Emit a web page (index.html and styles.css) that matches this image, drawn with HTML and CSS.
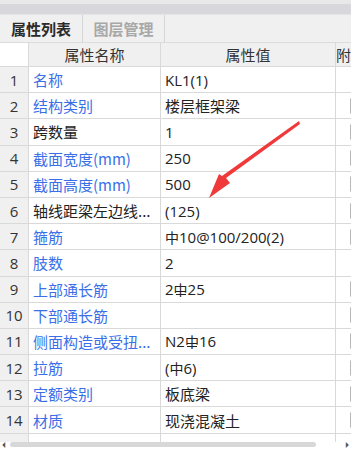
FILE: index.html
```html
<!DOCTYPE html>
<html>
<head>
<meta charset="utf-8">
<link rel="stylesheet" href="styles.css">
</head>
<body>
<div class="panel">
  <div class="topband"></div>
  <div class="tabs">
    <div class="tab active">属性列表</div>
    <div class="tab">图层管理</div>
    <div class="tabfill"></div>
  </div>
  <div class="grid">
    <div class="row head">
      <div class="c num corner"></div>
      <div class="c name">属性名称</div>
      <div class="c val">属性值</div>
      <div class="c extra">附</div>
    </div>
    <div class="row"><div class="c num">1</div><div class="c name blue">名称</div><div class="c val">KL1(1)</div><div class="c extra"></div></div>
    <div class="row"><div class="c num">2</div><div class="c name blue">结构类别</div><div class="c val">楼层框架梁</div><div class="c extra"><span class="box"></span></div></div>
    <div class="row"><div class="c num">3</div><div class="c name">跨数量</div><div class="c val">1</div><div class="c extra"><span class="box"></span></div></div>
    <div class="row"><div class="c num">4</div><div class="c name blue">截面宽度(mm)</div><div class="c val">250</div><div class="c extra"><span class="box"></span></div></div>
    <div class="row"><div class="c num">5</div><div class="c name blue">截面高度(mm)</div><div class="c val">500</div><div class="c extra"><span class="box"></span></div></div>
    <div class="row"><div class="c num">6</div><div class="c name">轴线距梁左边线...</div><div class="c val">(125)</div><div class="c extra"><span class="box"></span></div></div>
    <div class="row"><div class="c num">7</div><div class="c name blue">箍筋</div><div class="c val"><span class="hpb">中</span>10@100/200(2)</div><div class="c extra"><span class="box"></span></div></div>
    <div class="row"><div class="c num">8</div><div class="c name blue">肢数</div><div class="c val">2</div><div class="c extra"></div></div>
    <div class="row"><div class="c num">9</div><div class="c name blue">上部通长筋</div><div class="c val">2<span class="hrb">中</span>25</div><div class="c extra"><span class="box"></span></div></div>
    <div class="row"><div class="c num">10</div><div class="c name blue">下部通长筋</div><div class="c val"></div><div class="c extra"><span class="box"></span></div></div>
    <div class="row"><div class="c num">11</div><div class="c name blue">侧面构造或受扭...</div><div class="c val">N2<span class="hrb">中</span>16</div><div class="c extra"><span class="box"></span></div></div>
    <div class="row"><div class="c num">12</div><div class="c name blue">拉筋</div><div class="c val">(<span class="hpb">中</span>6)</div><div class="c extra"><span class="box"></span></div></div>
    <div class="row"><div class="c num">13</div><div class="c name blue">定额类别</div><div class="c val">板底梁</div><div class="c extra"><span class="box"></span></div></div>
    <div class="row"><div class="c num">14</div><div class="c name blue">材质</div><div class="c val">现浇混凝土</div><div class="c extra"><span class="box"></span></div></div>
    <div class="row partial"><div class="c num"></div><div class="c name"></div><div class="c val"></div><div class="c extra"></div></div>
  </div>
  <div class="hscroll">
    <span class="arr">&#x23F4;</span>
    <div class="thumb"></div>
    <span class="arr right">&#x23F5;</span>
  </div>
  <svg class="arrow" width="351" height="449" viewBox="0 0 351 449">
    <polygon points="299,121 300,124 226,178 230,183 209,198 219,174 222,176" fill="#f0393a"/>
  </svg>
</div>
</body>
</html>
```

FILE: styles.css
```css
html, body {
  margin: 0;
  padding: 0;
  background: #ffffff;
}
body {
  font-family: "Noto Sans CJK SC", "Open Sans", sans-serif;
  font-size: 15px;
  color: #222;
  width: 351px;
  height: 449px;
  overflow: hidden;
}
.panel {
  position: relative;
  width: 351px;
  height: 449px;
  overflow: hidden;
  display: flex;
  flex-direction: column;
}
.topband {
  height: 15px;
  background: #d8d8dc;
  border-top: 4px solid #e8e8ea;
  box-sizing: border-box;
  border-bottom: 1px solid #e4e4e6;
}
.tabs {
  display: flex;
  height: 28px;
  background: #f0f0f0;
  border-bottom: 1px solid #dcdcdc;
  box-sizing: border-box;
}
.tab {
  width: 83px;
  box-sizing: border-box;
  border-right: 1px solid #d6d6d6;
  display: flex;
  align-items: center;
  justify-content: center;
  font-weight: bold;
  font-size: 15px;
  color: #a8a8a8;
}
.tab.active {
  color: #2b2b2b;
}
.tab + .tab {
  width: 82px;
}
.tabfill {
  flex: 1;
}
.grid {
  display: flex;
  flex-direction: column;
}
.row {
  display: flex;
  height: 26.2px;
  border-bottom: 1px solid #d9d9d9;
  box-sizing: border-box;
}
.row.head {
  height: 24px;
}
.row.partial {
  border-bottom: none;
  height: 8px;
}
.c {
  box-sizing: border-box;
  border-right: 1px solid #d9d9d9;
  display: flex;
  align-items: center;
  white-space: nowrap;
  overflow: hidden;
}
.num {
  width: 29px;
  background: #f0f0f0;
  justify-content: center;
  color: #333;
  font-family: "Open Sans", "Noto Sans", sans-serif;
  font-size: 15px;
}
.name {
  width: 132px;
  padding-left: 4px;
}
.val {
  width: 175px;
  padding-left: 4px;
  font-family: "Open Sans", "Noto Sans CJK SC", sans-serif;
}
.extra {
  flex: 1;
  border-right: none;
  padding-left: 3px;
  color: #333;
}
.head .c {
  background: #f0f0f0;
  justify-content: center;
  color: #333;
  padding-left: 0;
}
.head .corner {
  background: #fff;
}
.blue {
  color: #3a6fe8;
}
.box {
  display: inline-block;
  width: 10px;
  height: 14px;
  border: 1px solid #b8b8b8;
  border-radius: 3px;
  background: #f4f4f4;
  margin-left: 11px;
}
.hpb, .hrb {
  font-family: "Noto Sans CJK SC", sans-serif;
  font-size: 14px;
  position: relative;
}
.hrb::after {
  content: "";
  position: absolute;
  left: 2px;
  right: 2px;
  bottom: 4px;
  height: 1px;
  background: #222;
}
.hscroll {
  height: 6px;
  display: flex;
  align-items: center;
  gap: 4px;
  padding: 0 2px;
  font-size: 8px;
  color: #555;
}
.thumb {
  flex: 1;
  height: 5px;
  background: #d8d8d8;
  border-radius: 3px;
  margin-right: 25px;
}
.arr {
  line-height: 6px;
}
.arrow {
  position: absolute;
  left: 0;
  top: 0;
  pointer-events: none;
}
```
